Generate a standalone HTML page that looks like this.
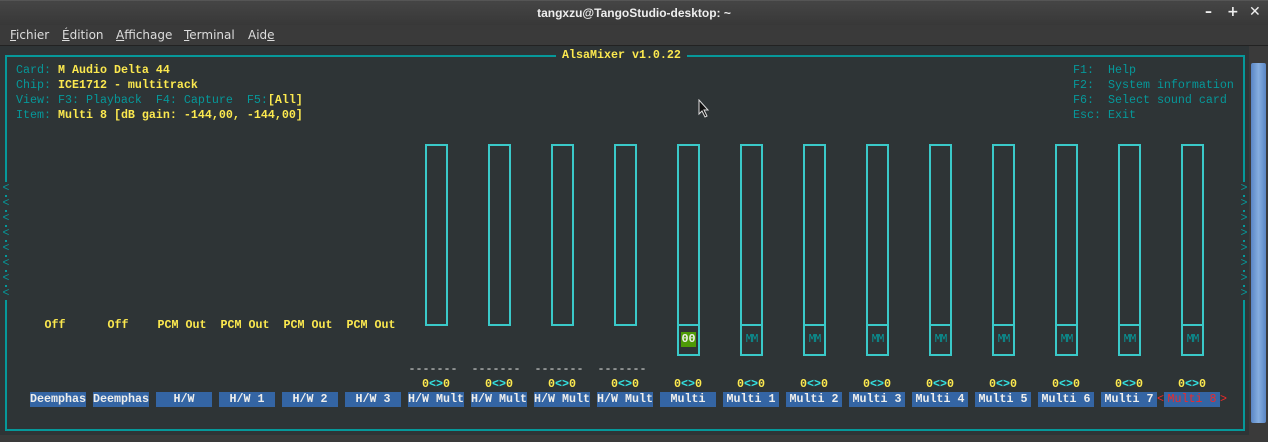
<!DOCTYPE html>
<html><head><meta charset="utf-8"><style>
*{margin:0;padding:0;box-sizing:border-box}
body{width:1268px;height:442px;overflow:hidden;background:#2e3436;position:relative;font-family:"Liberation Mono","DejaVu Sans Mono",monospace;font-size:11.67px}
.a{position:absolute;white-space:pre;line-height:15px}
.t{color:#06989a}.y{color:#fce94f;font-weight:bold}.w{color:#eeeeec}
#title{position:absolute;left:0;top:0;width:1268px;height:25px;background:linear-gradient(#454545,#383838);color:#eee;font:bold 12px "Liberation Sans",sans-serif;text-align:center;line-height:25px;border-top:1px solid #555}
#menu{position:absolute;left:0;top:25px;width:1268px;height:21px;background:#3a3a3a;color:#ddd;font:12px "DejaVu Sans","Liberation Sans",sans-serif;line-height:20px;border-bottom:1px solid #222}
#menu span{position:absolute;top:0}
#menu u{text-decoration:underline}
.sl{position:absolute;width:23px;border:2px solid #3ac9c9}
.lb{position:absolute;top:392px;height:15px;width:56px;background:#3465a4;color:#eeeeec;font-weight:bold;text-align:center;line-height:15px;font-size:11.67px;white-space:pre}
.off{position:absolute;top:318px;width:56px;text-align:center;color:#fce94f;font-weight:bold;line-height:15px}
.v{position:absolute;top:377px;width:56px;text-align:center;color:#fce94f;font-weight:bold;line-height:15px}
.v i{font-style:normal;color:#34e2e2}
.d{position:absolute;top:362px;width:56px;text-align:center;color:#eeeeec;line-height:15px}
.mm{position:absolute;top:333px;width:23px;text-align:center;color:#06989a;line-height:14px;font-size:11.5px;letter-spacing:-1px}
.ar{position:absolute;width:8px;height:13px;background:#2e3436;color:#06989a;line-height:13px;text-align:center}
</style></head><body>
<div id="title">tangxzu@TangoStudio-desktop: ~</div>
<div style="position:absolute;top:5px;left:1205px;color:#eee;font:bold 14px 'DejaVu Sans',sans-serif;line-height:14px">–</div>
<div style="position:absolute;top:5px;left:1227px;color:#eee;font:bold 14px 'DejaVu Sans',sans-serif;line-height:14px">+</div>
<div style="position:absolute;top:5px;left:1249px;color:#eee;font:bold 14px 'DejaVu Sans',sans-serif;line-height:14px">✕</div>
<div id="menu"><span style="left:10px"><u>F</u>ichier</span><span style="left:62px"><u>É</u>dition</span><span style="left:116px"><u>A</u>ffichage</span><span style="left:184px"><u>T</u>erminal</span><span style="left:248px">Aid<u>e</u></span></div>
<div style="position:absolute;left:1249px;top:46px;width:19px;height:396px;background:#3a3a3a"></div>
<div style="position:absolute;left:1251px;top:63px;width:15px;height:360px;background:linear-gradient(90deg,#5a86c4,#86aee0,#5a86c4);border-radius:2px"></div>
<div style="position:absolute;left:0;top:435px;width:1268px;height:7px;background:#3a3a3a"></div>
<div style="position:absolute;left:5px;top:55px;width:1240px;height:376px;border:2px solid #06989a"></div>
<div class="a y" style="left:556px;top:48px;background:#2e3436;padding:0 6px">AlsaMixer v1.0.22</div>
<div class="a" style="left:16px;top:63px"><span class="t">Card: </span><span class="y">M Audio Delta 44</span>
<span class="t">Chip: </span><span class="y">ICE1712 - multitrack</span>
<span class="t">View: F3: Playback  F4: Capture  F5:</span><span class="y">[All]</span>
<span class="t">Item: </span><span class="y">Multi 8 [dB gain: -144,00, -144,00]</span></div>
<div class="a t" style="left:1073px;top:63px">F1:  Help
F2:  System information
F6:  Select sound card
Esc: Exit</div>
<div class="ar" style="left:2px;top:182px">&lt;</div><div class="ar" style="left:2px;top:197px">&lt;</div><div class="ar" style="left:2px;top:212px">&lt;</div><div class="ar" style="left:2px;top:227px">&lt;</div><div class="ar" style="left:2px;top:242px">&lt;</div><div class="ar" style="left:2px;top:257px">&lt;</div><div class="ar" style="left:2px;top:272px">&lt;</div><div class="ar" style="left:2px;top:287px">&lt;</div>
<div class="ar" style="left:1240px;top:182px">&gt;</div><div class="ar" style="left:1240px;top:197px">&gt;</div><div class="ar" style="left:1240px;top:212px">&gt;</div><div class="ar" style="left:1240px;top:227px">&gt;</div><div class="ar" style="left:1240px;top:242px">&gt;</div><div class="ar" style="left:1240px;top:257px">&gt;</div><div class="ar" style="left:1240px;top:272px">&gt;</div><div class="ar" style="left:1240px;top:287px">&gt;</div>
<div class="sl" style="left:425px;top:144px;height:182px"></div>
<div class="sl" style="left:488px;top:144px;height:182px"></div>
<div class="sl" style="left:551px;top:144px;height:182px"></div>
<div class="sl" style="left:614px;top:144px;height:182px"></div>
<div class="sl" style="left:677px;top:144px;height:212px"></div>
<div class="sl" style="left:740px;top:144px;height:212px"></div>
<div class="sl" style="left:803px;top:144px;height:212px"></div>
<div class="sl" style="left:866px;top:144px;height:212px"></div>
<div class="sl" style="left:929px;top:144px;height:212px"></div>
<div class="sl" style="left:992px;top:144px;height:212px"></div>
<div class="sl" style="left:1055px;top:144px;height:212px"></div>
<div class="sl" style="left:1118px;top:144px;height:212px"></div>
<div class="sl" style="left:1181px;top:144px;height:212px"></div>
<div style="position:absolute;left:677px;top:324px;width:23px;height:2px;background:#3ac9c9;box-shadow:63px 0 #3ac9c9,126px 0 #3ac9c9,189px 0 #3ac9c9,252px 0 #3ac9c9,315px 0 #3ac9c9,378px 0 #3ac9c9,441px 0 #3ac9c9,504px 0 #3ac9c9"></div>
<div style="position:absolute;left:681px;top:332px;width:15px;height:15px;background:#4e9a06;color:#eeeeec;font-weight:bold;text-align:center;line-height:15px">00</div>
<div class="mm" style="left:740px">MM</div><div class="mm" style="left:803px">MM</div><div class="mm" style="left:866px">MM</div><div class="mm" style="left:929px">MM</div><div class="mm" style="left:992px">MM</div><div class="mm" style="left:1055px">MM</div><div class="mm" style="left:1118px">MM</div><div class="mm" style="left:1181px">MM</div>
<div class="off" style="left:27px">Off</div><div class="off" style="left:90px">Off</div>
<div class="off" style="left:152px;width:60px">PCM Out</div><div class="off" style="left:215px;width:60px">PCM Out</div><div class="off" style="left:278px;width:60px">PCM Out</div><div class="off" style="left:341px;width:60px">PCM Out</div>
<div class="d" style="left:405px">-------</div><div class="d" style="left:468px">-------</div><div class="d" style="left:531px">-------</div><div class="d" style="left:594px">-------</div>
<div class="v" style="left:408px">0<i>&lt;&gt;</i>0</div><div class="v" style="left:471px">0<i>&lt;&gt;</i>0</div><div class="v" style="left:534px">0<i>&lt;&gt;</i>0</div><div class="v" style="left:597px">0<i>&lt;&gt;</i>0</div><div class="v" style="left:660px">0<i>&lt;&gt;</i>0</div><div class="v" style="left:723px">0<i>&lt;&gt;</i>0</div><div class="v" style="left:786px">0<i>&lt;&gt;</i>0</div><div class="v" style="left:849px">0<i>&lt;&gt;</i>0</div><div class="v" style="left:912px">0<i>&lt;&gt;</i>0</div><div class="v" style="left:975px">0<i>&lt;&gt;</i>0</div><div class="v" style="left:1038px">0<i>&lt;&gt;</i>0</div><div class="v" style="left:1101px">0<i>&lt;&gt;</i>0</div><div class="v" style="left:1164px">0<i>&lt;&gt;</i>0</div>
<div class="lb" style="left:30px">Deemphas</div><div class="lb" style="left:93px">Deemphas</div><div class="lb" style="left:156px">H/W</div><div class="lb" style="left:219px">H/W 1</div><div class="lb" style="left:282px">H/W 2</div><div class="lb" style="left:345px">H/W 3</div>
<div class="lb" style="left:408px">H/W Mult</div><div class="lb" style="left:471px">H/W Mult</div><div class="lb" style="left:534px">H/W Mult</div><div class="lb" style="left:597px">H/W Mult</div>
<div class="lb" style="left:660px">Multi</div><div class="lb" style="left:723px">Multi 1</div><div class="lb" style="left:786px">Multi 2</div><div class="lb" style="left:849px">Multi 3</div><div class="lb" style="left:912px">Multi 4</div><div class="lb" style="left:975px">Multi 5</div><div class="lb" style="left:1038px">Multi 6</div><div class="lb" style="left:1101px">Multi 7</div>
<div class="lb" style="left:1164px;color:#ef2929;font-weight:normal">Multi 8</div>
<div class="a" style="left:1157px;top:392px;color:#ef2929">&lt;</div><div class="a" style="left:1220px;top:392px;color:#ef2929">&gt;</div>
<svg style="position:absolute;left:698px;top:99px" width="12" height="19" viewBox="0 0 12 19"><path d="M1 1 L1 15 L4 12 L7 18 L9 17 L6 11 L10 11 Z" fill="#111" stroke="#ddd" stroke-width="1"/></svg>
</body></html>
